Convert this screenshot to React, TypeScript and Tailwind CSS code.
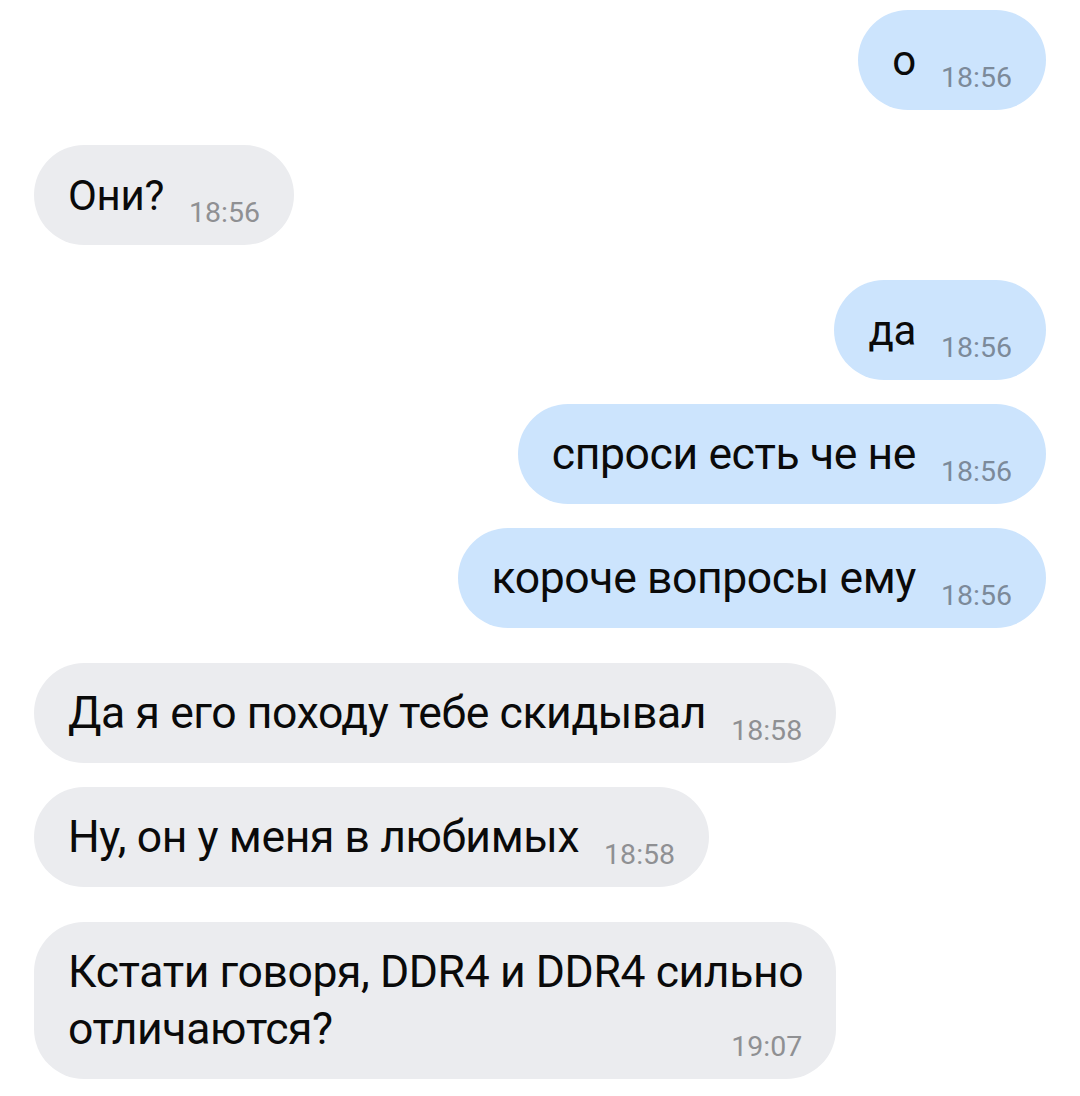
import React from 'react';

type Msg = { lines: string[]; time: string; out: boolean; gap: 'near' | 'far'; big?: boolean };

const MESSAGES: Msg[] = [
  { lines: ['о'], time: '18:56', out: true, gap: 'far' },
  { lines: ['Они?'], time: '18:56', out: false, gap: 'far' },
  { lines: ['да'], time: '18:56', out: true, gap: 'far' },
  { lines: ['спроси есть че не'], time: '18:56', out: true, gap: 'near', big: true },
  { lines: ['короче вопросы ему'], time: '18:56', out: true, gap: 'near', big: true },
  { lines: ['Да я его походу тебе скидывал'], time: '18:58', out: false, gap: 'far', big: true },
  { lines: ['Ну, он у меня в любимых'], time: '18:58', out: false, gap: 'near', big: true },
  { lines: ['Кстати говоря, DDR4 и DDR4 сильно', 'отличаются?'], time: '19:07', out: false, gap: 'far', big: true },
];

const Bubble: React.FC<{ msg: Msg; first: boolean }> = ({ msg, first }) => (
  <div
    className={`flex ${msg.out ? 'justify-end' : 'justify-start'} ${
      first ? '' : msg.gap === 'far' ? 'mt-[35px]' : 'mt-[24px]'
    }`}
  >
    <div
      className={`relative max-w-[803px] rounded-[50px] pl-[34px] pr-[33px] pt-[22px] pb-[21px] leading-[57px] text-[#0a0a0a] ${
        msg.out ? 'bg-[#cce4fd]' : 'bg-[#ebecef]'
      } ${msg.big ? 'text-[44.5px] tracking-[-0.4px]' : 'text-[42px] tracking-[-0.3px]'}`}
    >
      {msg.lines.map((line, i) => (
        <React.Fragment key={i}>
          {i > 0 && <br />}
          <span>{line}</span>
        </React.Fragment>
      ))}
      {/* место под время */}
      <span className="inline-block w-[97px] h-px" />
      <span
        className={`absolute right-[34px] bottom-[18px] text-[28.5px] leading-[28px] tracking-normal ${
          msg.out ? 'text-[#7c8a9a]' : 'text-[#8f9093]'
        }`}
      >
        {msg.time}
      </span>
    </div>
  </div>
);

export default function App() {
  return (
    <div className="w-[1080px] h-[1096px] bg-white px-[34px] pt-[10px] overflow-hidden font-['Roboto','Noto_Sans',sans-serif]">
      {MESSAGES.map((m, i) => (
        <Bubble key={i} msg={m} first={i === 0} />
      ))}
    </div>
  );
}
